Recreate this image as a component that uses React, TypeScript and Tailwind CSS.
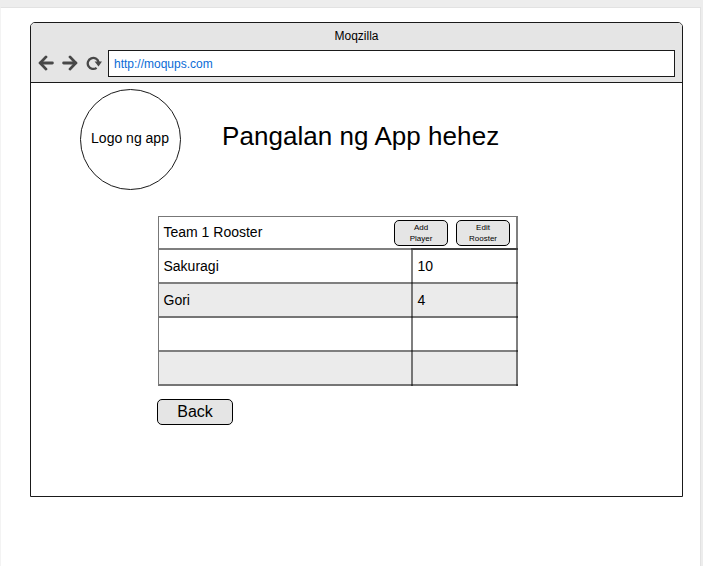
import React from "react";

const rows = [
  { name: "Sakuragi", number: "10" },
  { name: "Gori", number: "4" },
  { name: "", number: "" },
  { name: "", number: "" },
];

function Arrow({ flip = false }: { flip?: boolean }) {
  return (
    <svg width="16" height="16" viewBox="0 0 16 16" className={flip ? "-scale-x-100" : ""} fill="none" stroke="#484848" strokeWidth="2.8">
      <path d="M2.4 8H14.4" strokeLinecap="round" />
      <path d="M8 1.9L2.2 8L8 14.1" strokeLinecap="round" />
    </svg>
  );
}

function Reload() {
  return (
    <svg width="16" height="16" viewBox="0 0 16 16">
      <path d="M10.6 12.8A5.5 5.5 0 1 1 12.6 7.2" fill="none" stroke="#484848" strokeWidth="2.3" />
      <path d="M8.6 6.6H16L12.5 11.4Z" fill="#484848" />
    </svg>
  );
}

function SmallButton({ top, bottom }: { top: string; bottom: string }) {
  return (
    <button className="flex h-[26px] w-[54px] flex-col items-center rounded-[5px] border border-black bg-[#e5e5e5] pt-[1px] text-[8px] leading-[11px] text-black">
      <span>{top}</span>
      <span>{bottom}</span>
    </button>
  );
}

export default function App() {
  return (
    <div className="h-[566px] w-[703px] overflow-hidden bg-[#ededed] pt-[7px] font-['Liberation_Sans',Arial,sans-serif] text-black">
      <div className="h-[559px] w-[701px] border-x border-t border-[#e2e2e2] border-l-[#f3f3f3] bg-white pt-[14px] pl-[29px]">
        <div className="h-[475px] w-[653px] overflow-hidden rounded-t-[5px] border border-[#1a1a1a] bg-white">
          <header className="h-[60px] border-b border-[#1a1a1a] bg-[#e5e5e5]">
            <div className="h-[27px] pt-[5px] text-center text-[12px] leading-4">Moqzilla</div>
            <div className="flex h-[27px] items-center pr-[7px] pl-[7px]">
              <div className="flex w-[70px] pb-[1px]">
                <Arrow />
                <div className="ml-2"><Arrow flip /></div>
                <div className="ml-[8px]"><Reload /></div>
              </div>
              <div className="flex h-[27px] grow items-center border border-[#1a1a1a] bg-white pl-[5px] text-[12px] text-[#0a6cd6]">
                http://moqups.com
              </div>
            </div>
          </header>

          <main>
            <div className="flex pt-[6px] pl-[49px]">
              <div className="flex size-[101px] items-center justify-center rounded-full border border-[#1a1a1a] pr-[1px] pb-[2px] text-[14px]">
                Logo ng app
              </div>
              <h1 className="ml-[41px] pt-[32px] text-[26px] leading-[30px] tracking-[0.05px]">Pangalan ng App hehez</h1>
            </div>

            <section className="mt-[26px] ml-[127px] w-[360px] border-t border-l border-[#777] text-[14px]">
              <div className="flex h-[33px] items-center border-r-2 border-b-2 border-black/50 pl-[4.5px]">
                <span className="grow">Team 1 Rooster</span>
                <div className="mr-[6px] flex gap-2 pt-[1px]">
                  <SmallButton top="Add" bottom="Player" />
                  <SmallButton top="Edit" bottom="Rooster" />
                </div>
              </div>
              {rows.map((row, i) => (
                <div key={i} className={`flex h-[34px] border-b-2 border-black/50 ${i % 2 ? "bg-[#ebebeb]" : "bg-white"}`}>
                  <div className="flex grow items-center pl-[4.5px]">{row.name}</div>
                  <div
                    className={`-mb-[2px] flex w-[107px] items-center border-x-2 border-black/50 pb-[2px] pl-[4.5px] ${i === 0 ? "-mt-[2px] border-t-2" : ""}`}
                  >
                    {row.number}
                  </div>
                </div>
              ))}
            </section>

            <button className="mt-[13px] ml-[126px] flex h-[26px] w-[76px] items-center justify-center rounded-[5px] border border-black bg-[#e5e5e5] text-[16px]">
              Back
            </button>
          </main>
        </div>
      </div>
    </div>
  );
}
